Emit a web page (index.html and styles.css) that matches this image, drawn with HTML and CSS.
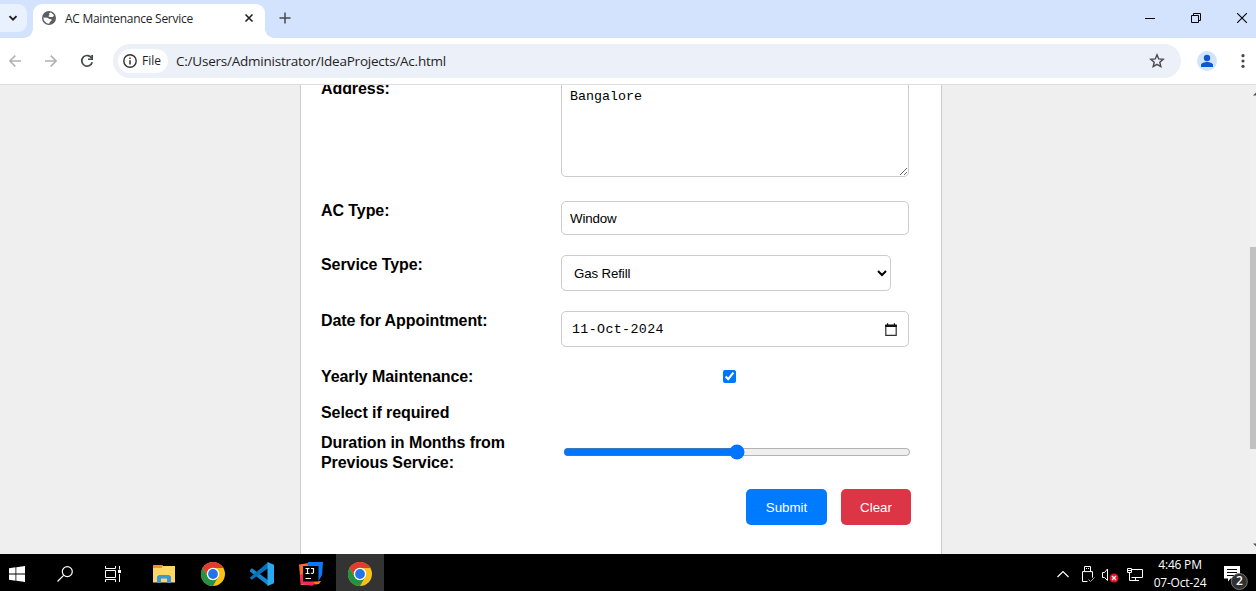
FILE: index.html
```html
<!DOCTYPE html>
<html lang="en">
<head>
<meta charset="utf-8">
<title>AC Maintenance Service</title>
<link rel="stylesheet" href="styles.css">
</head>
<body>
<svg width="0" height="0" class="defs">
  <symbol id="chrome" viewBox="0 0 24 24">
    <circle cx="12" cy="12" r="12" fill="#fbc116"/>
    <path d="M1.600 6A12 12 0 0 1 22.400 6L12 6A6 6 0 0 0 6.800 15Z" fill="#e33b2e"/>
    <path d="M1.600 6A12 12 0 0 0 12 24L17.200 15A6 6 0 0 1 6.800 15Z" fill="#229342"/>
    <circle cx="12" cy="12" r="6.200" fill="#fff"/>
    <circle cx="12" cy="12" r="4.900" fill="#2474e8"/>
  </symbol>
</svg>
<div class="screen">
  <header class="tabstrip">
    <div class="tab-search"><svg width="12" height="12" viewBox="0 0 12 12"><path d="M2.500 4.200 6 7.700l3.500-3.500" fill="none" stroke="#1f1f1f" stroke-width="1.900"/></svg></div>
    <div class="tab">
      <svg class="globe" width="14" height="14" viewBox="0 0 14 14"><circle cx="7" cy="7" r="7" fill="#5b5f64"/><path d="M8.300 1.500c1.700.4 3 1.600 3.700 3.200L10.500 6H8L6.300 5.200 7.500 4 7 2.600ZM1.300 6.500l4.200.2L7.300 8l2.200.2v1.600L7.800 11l-.6 1.800C4 12.500 1.500 10 1.300 6.500Z" fill="#fff"/></svg>
      <span class="tab-title">AC Maintenance Service</span>
      <svg class="tab-close" width="10" height="10" viewBox="0 0 10 10"><path d="m1.500 1.500 7 7m0-7-7 7" stroke="#202124" stroke-width="1.600"/></svg>
    </div>
    <svg class="new-tab" width="12" height="12" viewBox="0 0 12 12"><path d="M6 .5v11M.5 6h11" stroke="#46484b" stroke-width="1.500"/></svg>
    <div class="window-controls">
      <svg width="10" height="10" viewBox="0 0 10 10"><path d="M0 5.500h10" stroke="#000"/></svg>
      <svg width="10" height="10" viewBox="0 0 10 10"><path d="M.5 2.500h7v7h-7zM2.500 2.500v-2h7v7h-2" fill="none" stroke="#000"/></svg>
      <svg width="10" height="10" viewBox="0 0 10 10"><path d="m0 0 10 10M10 0 0 10" stroke="#000" stroke-width="1.100"/></svg>
    </div>
  </header>

  <div class="toolbar">
    <svg class="back" width="12" height="12" viewBox="0 0 12 12"><path d="M12 6H1M6.300.6.900 6l5.400 5.400" fill="none" stroke="#b0b1b3" stroke-width="1.500"/></svg>
    <svg class="forward" width="12" height="12" viewBox="0 0 12 12"><path d="M0 6h11M5.700.6 11.100 6l-5.400 5.400" fill="none" stroke="#b0b1b3" stroke-width="1.500"/></svg>
    <svg class="reload" width="14" height="14" viewBox="0 0 14 14"><path d="M11.800 4.400A5.300 5.300 0 1 0 12.200 8.200" fill="none" stroke="#46484b" stroke-width="1.700"/><path d="M13 1v5H8V4.400h3.300V1Z" fill="#46484b"/></svg>
    <div class="omnibox">
      <div class="file-chip">
        <svg width="14" height="14" viewBox="0 0 14 14"><circle cx="7" cy="7" r="6.200" fill="none" stroke="#303236" stroke-width="1.400"/><path d="M7 6.200v4.200M7 3.500V5" stroke="#303236" stroke-width="1.500"/></svg>
        <span>File</span>
      </div>
      <span class="url">C:/Users/Administrator/IdeaProjects/Ac.html</span>
      <svg class="star" width="16" height="16" viewBox="0 0 16 16"><path d="m8 1.800 1.700 4.100 4.500.4-3.400 2.900 1 4.400L8 11.300l-3.800 2.300 1-4.400-3.400-2.900 4.500-.4Z" fill="none" stroke="#46484b" stroke-width="1.400"/></svg>
    </div>
    <svg class="profile" width="20" height="20" viewBox="0 0 20 20"><circle cx="10" cy="10" r="10" fill="#d3e3fd"/><circle cx="10" cy="7" r="3.200" fill="#0b57d0"/><path d="M4 16v-2c0-2 3.500-3 6-3s6 1 6 3v2Z" fill="#0b57d0"/></svg>
    <svg class="menu" width="4" height="14" viewBox="0 0 4 14" fill="#46484b"><circle cx="2" cy="1.700" r="1.600"/><circle cx="2" cy="7" r="1.600"/><circle cx="2" cy="12.300" r="1.600"/></svg>
  </div>

  <main class="page">
    <form class="card">
      <div class="row row-address"><label for="address">Address:</label><textarea id="address" spellcheck="false">Bangalore</textarea></div>
      <div class="row"><label for="type">AC Type:</label><input id="type" class="field" type="text" value="Window"></div>
      <div class="row"><label for="service">Service Type:</label><select id="service"><option>Gas Refill</option></select></div>
      <div class="row"><span class="label">Date for Appointment:</span>
        <div class="date"><span>11-Oct-2024</span><svg width="12" height="13" viewBox="0 0 12 13"><path d="M.8 2.500h10.400v9.800H.8z" fill="none" stroke="#303030" stroke-width="1.200"/><path d="M.2 1.500h11.600V4H.2zM2 .3h1.200V2H2zM8.800.3H10V2H8.800z" fill="#101010"/></svg></div>
      </div>
      <div class="row row-yearly"><label for="yearly">Yearly Maintenance:</label><div class="check"><input id="yearly" type="checkbox" checked></div></div>
      <div class="row row-note"><span class="label">Select if required</span></div>
      <div class="row row-duration"><label for="months">Duration in Months from Previous Service:</label><input id="months" type="range" min="0" max="100" value="50"></div>
      <div class="actions"><button type="button" class="submit">Submit</button><button type="button" class="clear">Clear</button></div>
    </form>
    <div class="scrollbar">
      <svg width="3" height="4" viewBox="0 0 3 4"><path d="M0 3.500 3 .5v3Z" fill="#505050"/></svg>
      <div class="thumb"></div>
      <svg width="3" height="4" viewBox="0 0 3 4"><path d="M0 .5h3v3Z" fill="#505050"/></svg>
    </div>
  </main>

  <footer class="taskbar">
    <div class="slot start"><svg width="16" height="16" viewBox="0 0 16 16" fill="#fff"><path d="M0 2.200 6.500 1.300V7.500H0zM7.300 1.200 16 0v7.500H7.300zM0 8.400h6.500v6.300L0 13.800zM7.300 8.400H16V16l-8.700-1.200z"/></svg></div>
    <div class="slot"><svg width="16" height="16" viewBox="0 0 16 16" fill="none" stroke="#fff" stroke-width="1.200"><circle cx="10.300" cy="5.600" r="5"/><path d="M6.600 9.300.5 15.500"/></svg></div>
    <div class="slot task-view"><svg width="16" height="16" viewBox="0 0 16 16" fill="none" stroke="#fff"><path d="M.5 0v2.500h10V0M.5 16v-2.500h10V16M.5 4.500h10v7H.5zM14.500 0v3.500M14.500 8v8"/><path d="M13 4h3v3h-3z" fill="#fff" stroke="none"/></svg></div>
    <div class="slot"><svg width="22" height="18" viewBox="0 0 22 18"><path d="M0 0h9l1 1h12v16.500H0z" fill="#ffd766"/><path d="M0 0h9l1 1-1.500 2H0z" fill="#e79b13"/><path d="M4 18v-6.500L6 10h10l2 1.500V18h-4v-4.500H8V18z" fill="#3c96dc"/></svg></div>
    <div class="slot"><svg width="24" height="24"><use href="#chrome"/></svg></div>
    <div class="slot"><svg width="24" height="24" viewBox="0 0 24 24"><path d="M0 8 2 6.300 18 18v5.500L0 9.500z" fill="#1486cc"/><path d="M0 15.500 18 .3v6L2 17.700.2 16.500z" fill="#0871b7"/><path d="M17.500 0 24 2.800v18.400L17.500 24z" fill="#29a9ef"/></svg></div>
    <div class="slot"><svg width="24" height="24" viewBox="0 0 24 24"><path d="M0 2.500 10 1l6 12-3 10H1.800z" fill="#ff6b32"/><path d="m1 13 8-3 7 12-3 1.800L2 22z" fill="#fc2859"/><path d="M9 0h15l-1 13-4 7L8 7z" fill="#087bff"/><path d="M14 19h8l-2 3-4 .5z" fill="#f97a12"/><path d="M4 4h15.500v15.500H4z" fill="#000"/><path d="M6.500 6.500h4m-2 0v5m-2 0h4M12 6.500h2.500v3.800c0 1.200-1.500 1.500-2.500.8M6.500 16.500h5.500" fill="none" stroke="#fff" stroke-width="1.200"/></svg></div>
    <div class="slot active"><svg width="24" height="24"><use href="#chrome"/></svg></div>

    <div class="tray">
      <svg class="chevron" width="12" height="8" viewBox="0 0 12 8"><path d="M.5 7 6 1.500 11.500 7" fill="none" stroke="#fff" stroke-width="1.200"/></svg>
      <svg class="usb" width="13" height="17" viewBox="0 0 13 17" fill="none" stroke="#fff"><path d="M2.500 5.500v-5h6v5M.5 15.500v-9.900h10v6M.5 15.500h5M4.500 2v1M6.500 2v1"/><path d="m6.500 13.500 2 2 4-4" stroke="#aaa"/></svg>
      <svg class="sound" width="17" height="15" viewBox="0 0 17 15"><path d="M.5 4.500h2l3-3.500v11.500L2.500 9.500h-2z" fill="none" stroke="#fff"/><circle cx="12" cy="10" r="4.500" fill="#e81123"/><path d="m10 8 4 4m0-4-4 4" stroke="#fff" stroke-width="1.200"/></svg>
      <svg class="network" width="17" height="14" viewBox="0 0 17 14" fill="none" stroke="#fff"><path d="M5 1.500h10.500v8H4.500M8.500 9.500v3M5 12.500h7M.5.500h4v4h-4zM2.500 4.500v8H5M1 2.500h3"/></svg>
      <div class="clock"><span>4:46 PM</span><span>07-Oct-24</span></div>
      <div class="notice"><svg width="24" height="24" viewBox="0 0 24 24"><path d="M0 0h16v12.500H6.500L4 15.500v-3H0z" fill="#fff"/><path d="M3 3.500h10M3 6.500h10M3 9.500h7" stroke="#000"/><circle cx="15.300" cy="15.500" r="8" fill="#303030" stroke="#777" stroke-width="1"/></svg><span class="count">2</span></div>
    </div>
  </footer>
</div>
</body>
</html>
```

FILE: styles.css
```css
* { box-sizing: border-box; }
body { margin: 0; font-family: "Liberation Sans", Arial, sans-serif; }
svg { display: block; flex: none; }
.defs { position: absolute; }
.screen { width: 1256px; height: 591px; overflow: hidden; display: flex; flex-direction: column; background: #fff; }

.tabstrip { height: 38px; flex: none; display: flex; align-items: flex-start; background: #d3e3fd; }
.tab-search { width: 27px; height: 28px; margin-top: 4px; background: #e9f0fe; border-radius: 0 9px 9px 0; display: flex; align-items: center; padding-left: 7px; }
.tab { position: relative; width: 232px; height: 34px; margin: 4px 0 0 6px; padding: 0 11px 6px 9px; display: flex; align-items: center; background: #fff; border-radius: 9px 9px 0 0; font: 12px "Open Sans", sans-serif; color: #1f1f1f; }
.tab::before, .tab::after { content: ""; position: absolute; bottom: 0; width: 9px; height: 9px; }
.tab::before { left: -9px; background: radial-gradient(circle at 0 0, transparent 8.5px, #fff 9px); }
.tab::after { right: -9px; background: radial-gradient(circle at 100% 0, transparent 8.5px, #fff 9px); }
.tab-title { margin-left: 9px; white-space: nowrap; letter-spacing: -0.27px; }
.tab-close { margin-left: auto; }
.new-tab { margin: 12px 0 0 14px; }
.window-controls { margin: 13px 9px 0 auto; display: flex; gap: 36px; }

.toolbar { height: 47px; flex: none; display: flex; align-items: center; padding: 0 11px 1px 9px; border-bottom: 1px solid #dedede; }
.forward { margin-left: 24px; }
.reload { margin-left: 23px; }
.omnibox { width: 1068px; height: 34px; margin-left: 19px; padding: 0 16px 0 5px; display: flex; align-items: center; background: #ecf0f9; border-radius: 17px; font: 13.5px "Open Sans", sans-serif; color: #1f1f1f; }
.file-chip { width: 50px; height: 24px; padding-left: 5px; display: flex; align-items: center; gap: 5px; background: #fff; border-radius: 12px; font-size: 12px; }
.url { margin-left: 8px; white-space: nowrap; letter-spacing: -0.23px; }
.star { margin-left: auto; }
.profile { margin-left: 16px; }
.menu { margin-left: auto; }

.page { flex: 1; min-height: 0; overflow: hidden; display: flex; align-items: flex-start; background: #efefef; }
.card { width: 642px; height: 520px; margin: -26px 0 0 300px; padding: 20px 30px 20px 20px; background: #fff; border: 1px solid #ccc; font-size: 16px; color: #000; }
.row { display: flex; align-items: flex-start; margin-bottom: 20px; }
.row > label, .label { width: 240px; padding-right: 40px; flex: none; line-height: 20px; font-weight: bold; letter-spacing: -0.08px; white-space: nowrap; }
.row-address { height: 101px; }
.row-address > label { line-height: 18px; }
.row-yearly { height: 20px; margin-bottom: 16px; }
.row-note { height: 20px; margin-bottom: 10px; }
.row-duration { height: 40px; margin-bottom: 16px; }
.row-duration > label { white-space: normal; }
textarea, .field, select, .date { width: 348px; margin: 0; border: 1px solid #ccc; border-radius: 5px; background: #fff; color: #000; }
textarea { height: 97px; padding: 8px; font: 13.333px "Liberation Mono", monospace; letter-spacing: 0; }
.field { height: 34px; padding: 8px; font: 13.333px "Liberation Sans", sans-serif; letter-spacing: -0.15px; }
select { width: 330px; height: 36px; padding: 8px 7px 8px 8px; font: 13.333px "Liberation Sans", sans-serif; letter-spacing: -0.15px; }
.date { height: 36px; padding: 0 11px 0 10px; display: flex; align-items: center; justify-content: space-between; font: 13.333px "Liberation Mono", monospace; letter-spacing: 0.35px; }
.check { width: 337px; padding-top: 3px; display: flex; justify-content: center; }
.check input { width: 13px; height: 13px; margin: 0; }
input[type="range"] { width: 348px; height: 16px; margin: 11px 0 0 2px; flex: none; }
.actions { width: 590px; display: flex; justify-content: flex-end; gap: 14px; }
.actions button { height: 36px; padding: 0; border: 0; border-radius: 5px; color: #fff; font: 13.333px "Liberation Sans", sans-serif; }
.submit { width: 81px; background: #007bff; }
.clear { width: 70px; background: #dc3545; }

.scrollbar { width: 6px; height: 100%; margin-left: auto; padding: 7px 0; display: flex; flex-direction: column; align-items: flex-end; background: #f0f0f0; }
.thumb { width: 6px; height: 202px; margin: 151px 0 auto; background: #c1c1c1; }

.taskbar { height: 37px; flex: none; display: flex; background: #000; color: #fff; font: 12px "Open Sans", sans-serif; }
.slot { width: 48px; margin-right: 1px; padding-top: 2px; height: 37px; display: flex; align-items: center; justify-content: center; }
.start { width: 33px; margin-right: 8px; }
.task-view { padding-right: 2px; margin-right: 2px; }
.active { background: #333; }
.tray { margin-left: auto; padding-right: 8px; display: flex; align-items: flex-start; }
.chevron { margin-top: 16px; }
.usb { margin: 12px 0 0 13px; }
.sound { margin: 14px 0 0 7px; }
.network { margin: 14px 0 0 8px; }
.clock { width: 64px; margin: 2px 0 0 4px; display: flex; flex-direction: column; align-items: center; line-height: 18px; letter-spacing: -0.2px; white-space: nowrap; }
.notice { position: relative; margin: 12px 0 0 12px; }
.count { position: absolute; left: 8px; top: 6px; width: 15px; text-align: center; line-height: 18px; font-weight: 600; }
```
